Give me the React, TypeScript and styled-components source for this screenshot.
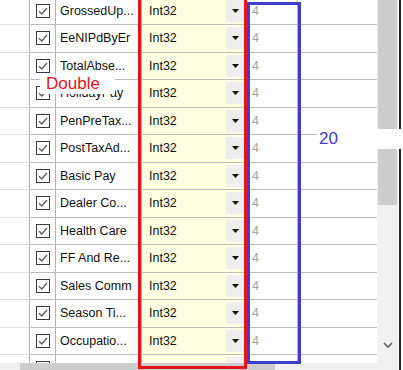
// 컬럼 편집 그리드 캡처 재현
import styled, { createGlobalStyle } from 'styled-components';

const GlobalStyle = createGlobalStyle`
  html, body {
    margin: 0;
    padding: 0;
    background: #ffffff;
  }
`;

// 전체 화면 - 그리드 + 세로 스크롤바를 가로로 배치
const Screen = styled.div`
  position: relative;
  display: flex;
  width: 403px;
  height: 370px;
  overflow: hidden;
  background: #ffffff;
  font-family: "Liberation Sans", Arial, sans-serif;
  font-size: 12.5px;
  color: #111111;
`;

const GridPane = styled.div`
  display: flex;
  flex-direction: column;
  width: 377px;
  flex: none;
`;

// 스크롤된 상태라 첫 행이 살짝 잘려 보임
const Viewport = styled.div`
  height: 363px;
  overflow: hidden;
`;

const RowList = styled.div`
  margin-top: -2.5px;
`;

const Row = styled.div`
  display: grid;
  grid-template-columns: 30px 26px 86px 103px 53px 1fr;
  height: 27.5px;
`;

const Cell = styled.div<{ $header?: boolean; $bg?: string }>`
  box-sizing: border-box;
  display: flex;
  align-items: center;
  min-width: 0;
  border-bottom: 1px solid ${({ $header }) => ($header ? '#e2e2e2' : '#bdbdbd')};
  border-right: 1px solid #b3b3b3;
  background: ${({ $bg }) => $bg ?? '#ffffff'};
`;

const CheckCell = styled(Cell)`
  justify-content: center;
`;

const NameCell = styled(Cell)`
  padding-left: 4px;
  white-space: nowrap;
  overflow: hidden;
`;

const TypeCell = styled(Cell)`
  padding-left: 7px;
  justify-content: space-between;
`;

const LengthCell = styled(Cell)`
  padding-left: 7px;
  color: #a3a3a3;
`;

const LastCell = styled(Cell)`
  border-right: none;
`;

// 체크박스
const CheckBox = styled.span`
  box-sizing: border-box;
  display: flex;
  align-items: center;
  justify-content: center;
  width: 14px;
  height: 14px;
  border: 1px solid #3a3a3a;
  background: #ffffff;
`;

// 콤보박스 드롭다운 버튼
const DropButton = styled.span`
  display: flex;
  align-items: center;
  justify-content: center;
  width: 18px;
  height: 22px;
  background: #eeeeee;
`;

const HScroll = styled.div`
  height: 7px;
  background: #f0f0f0;
  padding-left: 20px;
`;

const HThumb = styled.div`
  width: 255px;
  height: 100%;
  background: #cdcdcd;
`;

const VScroll = styled.div`
  display: flex;
  flex-direction: column;
  width: 20px;
  padding-left: 1px;
  background: #f0f0f0;
  flex: none;
`;

const VThumb = styled.div`
  width: 19px;
  height: 205px;
  background: #cdcdcd;
`;

const ArrowDown = styled.div`
  margin-top: auto;
  height: 30px;
  display: flex;
  justify-content: center;
  padding-top: 2px;
  box-sizing: border-box;
`;

const Gap = styled.div`
  width: 1px;
  flex: none;
`;

const DarkEdge = styled.div`
  width: 2px;
  background: #262626;
  flex: none;
`;

// 주석 박스 (캡처 위에 그려진 표시)
const MarkBox = styled.div<{ $color: string; $left: number; $top: number; $w: number; $h: number }>`
  position: absolute;
  box-sizing: border-box;
  left: ${({ $left }) => $left}px;
  top: ${({ $top }) => $top}px;
  width: ${({ $w }) => $w}px;
  height: ${({ $h }) => $h}px;
  border: 3px solid ${({ $color }) => $color};
  pointer-events: none;
`;

const Note = styled.div<{ $color: string }>`
  position: absolute;
  height: 20px;
  line-height: 20px;
  background: #ffffff;
  font-size: 17px;
  color: ${({ $color }) => $color};
`;

const DoubleNote = styled(Note)`
  left: 40px;
  top: 74px;
  width: 69px;
  padding-left: 6px;
`;

const CountNote = styled(Note)`
  left: 317px;
  top: 129px;
  right: 0;
  padding-left: 2px;
`;

const names = [
  'GrossedUp...',
  'EeNIPdByEr',
  'TotalAbse...',
  'HolidayPay',
  'PenPreTax...',
  'PostTaxAd...',
  'Basic Pay',
  'Dealer Co...',
  'Health Care',
  'FF And Re...',
  'Sales Comm',
  'Season Ti...',
  'Occupatio...',
  'NIE Pay...'
];

function CheckMark() {
  return (
    <svg width="12" height="12" viewBox="0 0 12 12" aria-hidden="true">
      <path d="M2 6.2 L4.8 9 L10 3" fill="none" stroke="#5c5c5c" strokeWidth="1.3" />
    </svg>
  );
}

function Caret() {
  return (
    <svg width="7" height="4" viewBox="0 0 7 4" aria-hidden="true">
      <path d="M0 0 H7 L3.5 4 Z" fill="#111111" />
    </svg>
  );
}

export default function App() {
  return (
    <>
      <GlobalStyle />
      <Screen>
        <GridPane>
          <Viewport>
            <RowList>
              {names.map((name) => (
                <Row key={name}>
                  <Cell $header />
                  <CheckCell>
                    <CheckBox>
                      <CheckMark />
                    </CheckBox>
                  </CheckCell>
                  <NameCell>{name}</NameCell>
                  <TypeCell $bg="#ffffe1">
                    Int32
                    <DropButton>
                      <Caret />
                    </DropButton>
                  </TypeCell>
                  <LengthCell>4</LengthCell>
                  <LastCell />
                </Row>
              ))}
            </RowList>
          </Viewport>
          <HScroll>
            <HThumb />
          </HScroll>
        </GridPane>

        <VScroll>
          <VThumb />
          <ArrowDown>
            <svg width="10" height="7" viewBox="0 0 10 7" aria-hidden="true">
              <path d="M1 1 L5 5 L9 1" fill="none" stroke="#606060" strokeWidth="1.6" />
            </svg>
          </ArrowDown>
        </VScroll>
        <Gap />
        <DarkEdge />

        {/* 캡처 위 주석: 빨간/파란 박스와 라벨 */}
        <MarkBox $color="#e8141c" $left={138} $top={-3} $w={109} $h={372} />
        <MarkBox $color="#3b3fc9" $left={247} $top={2} $w={54} $h={362} />
        <DoubleNote $color="#e8141c">Double</DoubleNote>
        <CountNote $color="#3b3fc9">20</CountNote>
      </Screen>
    </>
  );
}
